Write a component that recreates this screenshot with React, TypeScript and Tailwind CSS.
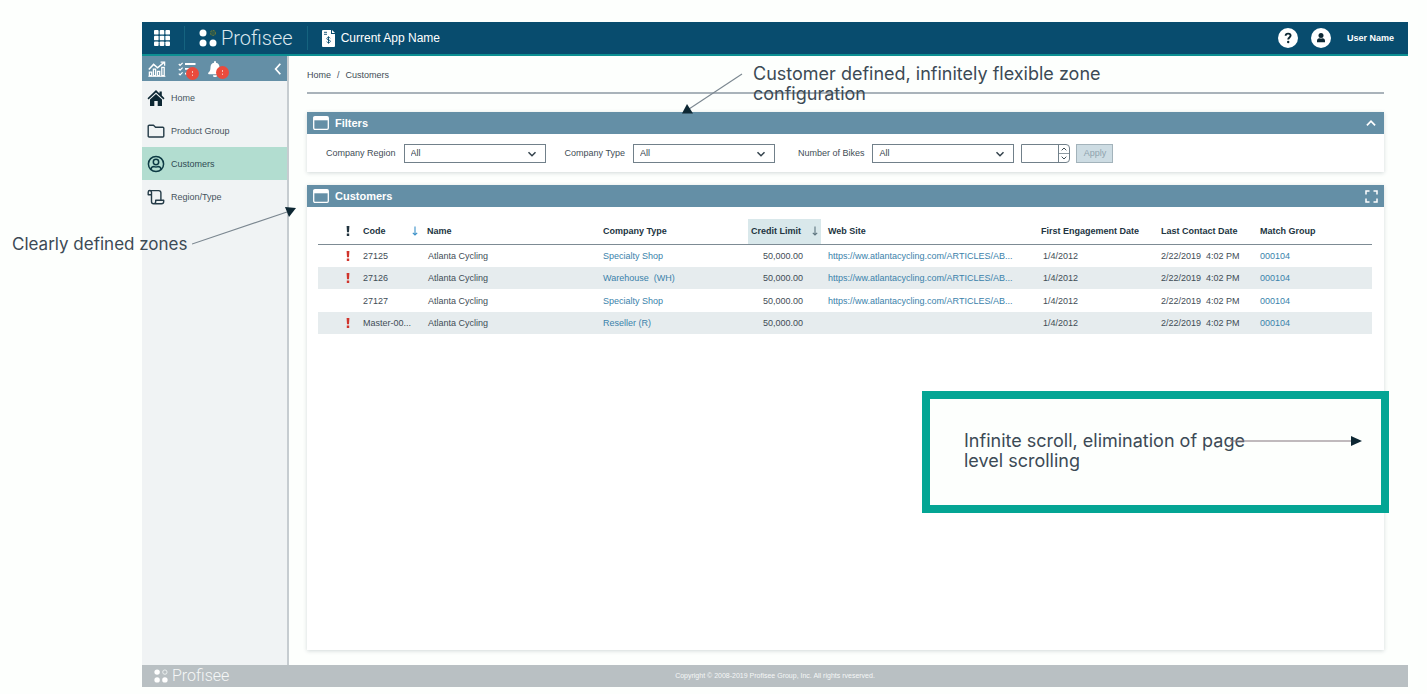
import React from "react";

type Row = {
  alert: boolean;
  code: string;
  name: string;
  type: string;
  credit: string;
  site: string;
  first: string;
  last: string;
  match: string;
};

const SITE = "https://ww.atlantacycling.com/ARTICLES/AB...";

const rows: Row[] = [
  { alert: true, code: "27125", name: "Atlanta Cycling", type: "Specialty Shop", credit: "50,000.00", site: SITE, first: "1/4/2012", last: "2/22/2019  4:02 PM", match: "000104" },
  { alert: true, code: "27126", name: "Atlanta Cycling", type: "Warehouse  (WH)", credit: "50,000.00", site: SITE, first: "1/4/2012", last: "2/22/2019  4:02 PM", match: "000104" },
  { alert: false, code: "27127", name: "Atlanta Cycling", type: "Specialty Shop", credit: "50,000.00", site: SITE, first: "1/4/2012", last: "2/22/2019  4:02 PM", match: "000104" },
  { alert: true, code: "Master-00...", name: "Atlanta Cycling", type: "Reseller (R)", credit: "50,000.00", site: "", first: "1/4/2012", last: "2/22/2019  4:02 PM", match: "000104" },
];

function LogoDots({ className, muted }: { className: string; muted?: boolean }) {
  return (
    <svg viewBox="0 0 18 18" className={className} aria-hidden="true">
      <circle cx="4" cy="4" r="3.5" fill="#fff" />
      <circle cx="4" cy="14" r="3.5" fill="#fff" />
      <circle cx="14" cy="14" r="3.5" fill="#fff" />
      {muted ? (
        <circle cx="14" cy="4" r="2.8" fill="none" stroke="#eef2f2" strokeWidth="1.2" />
      ) : (
        <g>
          <circle cx="14" cy="4" r="3" fill="#2c5a4e" />
          <circle cx="14" cy="4" r="2.6" fill="none" stroke="#6f7a3c" strokeWidth="1" strokeDasharray="1.5 1.5" />
        </g>
      )}
    </svg>
  );
}

function GridIcon() {
  return (
    <svg viewBox="0 0 16 16" className="size-4" fill="#fff" aria-hidden="true">
      {[0, 5.7, 11.4].map((y) =>
        [0, 5.7, 11.4].map((x) => <rect key={`${x}-${y}`} x={x} y={y} width="4.6" height="4.6" rx="0.9" />)
      )}
    </svg>
  );
}

function InvoiceIcon() {
  return (
    <svg viewBox="0 0 13 17" className="h-[17px] w-[13px]" aria-hidden="true">
      <path d="M1 0h8v4h4v12a1 1 0 0 1-1 1H1a1 1 0 0 1-1-1V1a1 1 0 0 1 1-1z" fill="#fff" />
      <path d="M10 0l3 3h-3z" fill="#fff" />
      <path d="M2 2.3h3M2 4.3h3" stroke="#084c6e" strokeWidth="0.9" />
      <path d="M8.3 8.2c-.4-.6-1-.8-1.8-.8-1 0-1.7.4-1.7 1.2 0 1.8 3.6.8 3.6 2.7 0 .9-.8 1.3-1.8 1.3-.9 0-1.6-.3-2-.9M6.5 6.3v7.4" fill="none" stroke="#084c6e" strokeWidth="0.9" />
    </svg>
  );
}

function AnalyticsIcon() {
  return (
    <svg viewBox="0 0 18 16" className="h-4 w-[18px]" fill="none" stroke="#fff" aria-hidden="true">
      <path d="M.8 8.4l4.800-5 4 3.400L16 1.400" strokeWidth="1.500" />
      <path d="M12.600 1.200h4v3.600" strokeWidth="1.300" />
      <path d="M1.400 14.600v-3.400h2.200v3.400zM5.400 14.600V8.200h2.200v6.400zM9.500 14.600v-4.200h2.200v4.200zM13.800 14.600V6.400h2.400v8.200z" strokeWidth="1.300" />
      <path d="M.4 15.300h17" strokeWidth="1" />
    </svg>
  );
}

function TasksIcon() {
  return (
    <svg viewBox="0 0 18 14" className="h-3.5 w-[18px]" fill="none" stroke="#fff" aria-hidden="true">
      <path d="M.8 2l1.300 1.300L4.600.8M.8 6.800l1.300 1.300 2.500-2.500M.8 11.600l1.300 1.300 2.500-2.500" strokeWidth="1.200" />
      <path d="M7 2h10.500M7 6.800h10.500M7 11.600h10.500" strokeWidth="1.800" />
    </svg>
  );
}

function BellIcon() {
  return (
    <svg viewBox="0 0 14 16" className="h-4 w-3.5" fill="#fff" aria-hidden="true">
      <path d="M7 0a1 1 0 0 0-1 1v.8C3.700 2.300 2.500 4 2.500 6.300c0 3-.9 4.300-2 5.300-.7.700-.4 1.700.5 1.700h12c.9 0 1.200-1 .5-1.700-1.100-1-2-2.300-2-5.300C11.500 4 10.300 2.300 8 1.800V1a1 1 0 0 0-1-1z" />
      <path d="M5 14.200h4a2 2 0 0 1-4 0z" />
    </svg>
  );
}

function Badge() {
  return (
    <svg viewBox="0 0 13 13" className="absolute top-[5px] left-2 size-[13px]" aria-hidden="true">
      <circle cx="6.500" cy="6.500" r="6.500" fill="#ea4b3c" />
      <path d="M6.500 4v2M6.500 7.500v1.500" stroke="#f9c8bd" strokeWidth="0.9" />
    </svg>
  );
}

function HomeIcon() {
  return (
    <svg viewBox="0 0 18 18" className="size-[18px]" fill="#0d2733" aria-hidden="true">
      <path d="M9 1L.5 9.300l1 1.200L9 3.400l7.500 7.100 1-1.200-2.700-2.700V2.500h-2.300v1.900z" />
      <path d="M9 4.900l-6 5.700V17h4.300v-5h3.400v5H15v-6.400z" />
    </svg>
  );
}

function FolderIcon() {
  return (
    <svg viewBox="0 0 18 18" className="size-[18px]" fill="none" stroke="#243b47" strokeWidth="1.400" strokeLinejoin="round" aria-hidden="true">
      <path d="M1.200 4.200c0-.6.400-1 1-1h4.300l2 2h7.300c.6 0 1 .4 1 1v7.800c0 .6-.4 1-1 1H2.200c-.6 0-1-.4-1-1z" />
    </svg>
  );
}

function PersonIcon() {
  return (
    <svg viewBox="0 0 18 18" className="size-[18px]" fill="none" stroke="#0d3a44" strokeWidth="1.500" aria-hidden="true">
      <circle cx="9" cy="9" r="7.600" />
      <circle cx="9" cy="7" r="2.700" />
      <path d="M3.800 14.300c.6-2 1.900-2.700 3.200-2.700.8.300 1.300.4 2 .4s1.200-.1 2-.4c1.300 0 2.600.7 3.200 2.700" />
    </svg>
  );
}

function ScrollIcon() {
  return (
    <svg viewBox="0 0 18 18" className="size-[18px]" fill="none" stroke="#243b47" strokeWidth="1.400" strokeLinejoin="round" aria-hidden="true">
      <path d="M4.500 6.800H1.200V4.200a1.600 1.600 0 0 1 3.300 0v9.300c0 1.300.9 2.200 2.100 2.200s2.100-.9 2.100-2.200v-1.200h8v1.200c0 1.300-.9 2.200-2.200 2.200H6.600" />
      <path d="M2.900 2.600h8.800c1.300 0 2.200.9 2.200 2.200v7.500" />
    </svg>
  );
}

function WindowIcon() {
  return (
    <svg viewBox="0 0 16 14" className="h-3.5 w-4" aria-hidden="true">
      <rect x="0.700" y="0.700" width="14.600" height="12.600" rx="1.200" fill="none" stroke="#fff" strokeWidth="1.300" />
      <path d="M1 1h14v3.300H1z" fill="#fff" />
    </svg>
  );
}

function Chevron({ className, d }: { className: string; d: string }) {
  return (
    <svg viewBox="0 0 12 12" className={className} fill="none" stroke="currentColor" strokeWidth="1.500" aria-hidden="true">
      <path d={d} />
    </svg>
  );
}

function SortArrow({ className }: { className: string }) {
  return (
    <svg viewBox="0 0 6 10" className={className} fill="none" stroke="currentColor" strokeWidth="1.100" aria-hidden="true">
      <path d="M3 .5v8.500M.8 6.800L3 9l2.200-2.200" />
    </svg>
  );
}

function Bang({ className }: { className: string }) {
  return (
    <svg viewBox="0 0 4 10" className={className} fill="currentColor" role="img" aria-label="Alert">
      <path d="M.6 0h2.800L3 6.300H1zM.8 7.600h2.400V10H.8z" />
    </svg>
  );
}

function FilterSelect({ id, label }: { id: string; label: string }) {
  return (
    <div className="flex items-center gap-2">
      <label htmlFor={id} className="whitespace-nowrap text-[#3f4d56]">{label}</label>
      <div className="relative">
        <select id={id} className="block h-[19px] w-[142px] appearance-none border border-[#71808a] bg-white pl-1.5 text-[9px] text-[#33424c]">
          <option>All</option>
        </select>
        <Chevron className="pointer-events-none absolute top-1 right-2 size-3 text-[#33424c]" d="M2.500 4.200l3.500 3.500 3.500-3.500" />
      </div>
    </div>
  );
}

function PanelHeader({ title, children }: { title: string; children: React.ReactNode }) {
  return (
    <div className="flex h-[22px] shrink-0 items-center bg-[#648fa6] pr-1.5 pl-1.5 text-white">
      <WindowIcon />
      <h2 className="ml-1.5 flex-1 text-[11px] font-bold">{title}</h2>
      {children}
    </div>
  );
}

const navItems = [
  { label: "Home", icon: <HomeIcon />, active: false },
  { label: "Product Group", icon: <FolderIcon />, active: false },
  { label: "Customers", icon: <PersonIcon />, active: true },
  { label: "Region/Type", icon: <ScrollIcon />, active: false },
];

export default function App() {
  return (
    <div className="relative flex min-h-screen flex-col bg-[#fdfffd] pt-[22px] pr-[19px] pb-[7px] pl-[142px] font-['Liberation_Sans',Arial,sans-serif] text-[9px] leading-4 text-[#3f4d56]">
      <header className="flex h-[34px] items-center border-b-2 border-[#0c8f92] bg-[#084c6e] text-white">
        <button type="button" aria-label="Apps" className="ml-3">
          <GridIcon />
        </button>
        <div className="ml-3.5 flex h-6 items-center border-l border-[#15637f] pl-3.5">
          <LogoDots className="size-[18px]" />
          <span className="ml-1 font-['Roboto',sans-serif] text-[20px] leading-6 font-light text-[#dbe7ee]">Profisee</span>
        </div>
        <div className="ml-3.5 flex h-6 items-center gap-1.5 border-l border-[#15637f] pl-3.5">
          <InvoiceIcon />
          <span className="text-xs">Current App Name</span>
        </div>
        <div className="mr-3.5 ml-auto flex items-center">
          <button type="button" aria-label="Help" className="size-5">
            <svg viewBox="0 0 20 20" className="size-5" aria-hidden="true">
              <circle cx="10" cy="10" r="10" fill="#fff" />
              <path d="M7.600 7.800c.1-1.500 1.100-2.200 2.500-2.200s2.500.7 2.500 2c0 1.900-2.400 1.800-2.400 3.900" fill="none" stroke="#0d2733" strokeWidth="1.900" />
              <circle cx="10.200" cy="14" r="1.200" fill="#0d2733" />
            </svg>
          </button>
          <button type="button" aria-label="Account" className="ml-[13px] size-5">
            <svg viewBox="0 0 20 20" className="size-5" aria-hidden="true">
              <circle cx="10" cy="10" r="10" fill="#fff" />
              <circle cx="10" cy="7.500" r="2.500" fill="#0d2733" />
              <path d="M6 14.200v-1.500c0-1.600 1-2.500 2.300-2.500 1 .5 2.400.5 3.400 0 1.300 0 2.300.9 2.300 2.500v1.500z" fill="#0d2733" />
            </svg>
          </button>
          <span className="ml-4 font-bold">User Name</span>
        </div>
      </header>

      <div className="flex flex-1">
        <aside className="w-[147px] shrink-0 border-r-2 border-[#c6ccd0] bg-[#f0f3f4]">
          <div className="flex h-[25px] items-center bg-[#648fa6] pl-1.5 text-white">
            <button type="button" aria-label="Analytics"><AnalyticsIcon /></button>
            <button type="button" aria-label="Tasks" className="relative ml-3"><TasksIcon /><Badge /></button>
            <button type="button" aria-label="Notifications" className="relative ml-3"><BellIcon /><Badge /></button>
            <button type="button" aria-label="Collapse menu" className="mr-0.5 ml-auto">
              <Chevron className="size-3.5" d="M8 1.500l-4 4.500 4 4.500" />
            </button>
          </div>
          <nav>
            {navItems.map((item) => (
              <a
                key={item.label}
                href="#"
                className={
                  item.active
                    ? "flex h-[33px] items-center gap-1.5 bg-[#b2ddd0] pl-[5px] text-[#2f4a52]"
                    : "flex h-[33px] items-center gap-1.5 pl-[5px] text-[#46545d]"
                }
              >
                {item.icon}
                {item.label}
              </a>
            ))}
          </nav>
        </aside>

        <main className="flex min-w-0 flex-1 flex-col pr-6 pb-[15px] pl-[18px]">
          <div className="flex h-[38px] items-center gap-1.5 border-b-2 border-[#a9b3ba] pt-0.5">
            <a href="#">Home</a>
            <span>/</span>
            <span>Customers</span>
          </div>

          <section className="mt-[18px] bg-white shadow-[0_1px_4px_rgba(60,80,90,0.22)]">
            <PanelHeader title="Filters">
              <button type="button" aria-label="Collapse filters">
                <Chevron className="size-3.5" d="M2.500 8L6 4.500 9.500 8" />
              </button>
            </PanelHeader>
            <div className="flex h-[38px] items-center pl-[19px]">
              <FilterSelect id="region" label="Company Region" />
              <div className="ml-[19px]"><FilterSelect id="type" label="Company Type" /></div>
              <div className="ml-[23px]"><FilterSelect id="bikes" label="Number of Bikes" /></div>
              <div className="ml-[7px] flex h-[19px] w-[49px] rounded-r-sm border border-[#71808a]">
                <input aria-label="Bike count" className="w-9 bg-white px-1 outline-none" />
                <div className="flex flex-1 flex-col divide-y divide-[#8d99a1] border-l border-[#71808a]">
                  <button type="button" aria-label="Increase" className="flex flex-1 items-center justify-center">
                    <Chevron className="size-2" d="M2.500 8L6 4.500 9.500 8" />
                  </button>
                  <button type="button" aria-label="Decrease" className="flex flex-1 items-center justify-center">
                    <Chevron className="size-2" d="M2.500 4L6 7.500 9.500 4" />
                  </button>
                </div>
              </div>
              <button type="button" className="ml-1.5 h-[19px] w-[37px] border border-[#a3b3bb] bg-[#cddce3] text-[#8fa3ae]">Apply</button>
            </div>
          </section>

          <section className="mt-[13px] flex flex-1 flex-col bg-white shadow-[0_1px_4px_rgba(60,80,90,0.22)]">
            <PanelHeader title="Customers">
              <button type="button" aria-label="Full screen">
                <svg viewBox="0 0 13 13" className="size-[13px]" fill="none" stroke="#fff" strokeWidth="1.500" aria-hidden="true">
                  <path d="M4.500 1H1v3.500M8.500 1H12v3.500M4.500 12H1V8.500M8.500 12H12V8.500" />
                </svg>
              </button>
            </PanelHeader>
            <div className="pt-3 pr-3 pl-[11px]">
              <table className="w-full table-fixed border-collapse text-left whitespace-pre">
                <colgroup>
                  <col className="w-[45px]" />
                  <col className="w-16" />
                  <col className="w-44" />
                  <col className="w-[145px]" />
                  <col className="w-[73px]" />
                  <col />
                  <col className="w-[120px]" />
                  <col className="w-[99px]" />
                  <col className="w-28" />
                </colgroup>
                <thead className="text-[#22343f]">
                  <tr className="h-[25px] border-b border-[#7d8b94]">
                    <th className="p-0"><Bang className="ml-7 h-2.5 w-1" /></th>
                    <th className="p-0">
                      <div className="flex items-center justify-between pr-[9px]">Code<SortArrow className="h-2.5 w-1.5 text-[#3d92c9]" /></div>
                    </th>
                    <th className="p-0">Name</th>
                    <th className="p-0">Company Type</th>
                    <th className="bg-[#d9e8eb] p-0">
                      <div className="flex items-center justify-between px-[3px]">Credit Limit<SortArrow className="h-2.5 w-1.5 text-[#5f7680]" /></div>
                    </th>
                    <th className="py-0 pr-0 pl-[7px]">Web Site</th>
                    <th className="p-0">First Engagement Date</th>
                    <th className="p-0">Last Contact Date</th>
                    <th className="p-0">Match Group</th>
                  </tr>
                </thead>
                <tbody>
                  {rows.map((r, i) => (
                    <tr key={i} className="odd:h-[23px] even:h-[22px] even:bg-[#e6ecee]">
                      <td className="p-0">{r.alert && <Bang className="ml-7 h-2.5 w-1 text-[#d0342c]" />}</td>
                      <td className="p-0">{r.code}</td>
                      <td className="p-0 pl-px">{r.name}</td>
                      <td className="p-0"><a href="#" className="text-[#3a82ab]">{r.type}</a></td>
                      <td className="py-0 pr-[18px] pl-0 text-right">{r.credit}</td>
                      <td className="py-0 pr-0 pl-[7px]">{r.site && <a href="#" className="text-[#3a82ab]">{r.site}</a>}</td>
                      <td className="p-0 pl-0.5">{r.first}</td>
                      <td className="p-0">{r.last}</td>
                      <td className="p-0"><a href="#" className="text-[#3a82ab]">{r.match}</a></td>
                    </tr>
                  ))}
                </tbody>
              </table>
            </div>
          </section>
        </main>
      </div>

      <footer className="relative flex h-[22px] items-center justify-center bg-[#b9c0c3] text-[7px] text-[#f5f7f7]">
        <div className="absolute top-0 left-3 flex h-[22px] items-center gap-1">
          <LogoDots className="size-3.5" muted />
          <span className="font-['Roboto',sans-serif] text-[16px] leading-5 font-light">Profisee</span>
        </div>
        <p>Copyright © 2008-2019 Profisee Group, Inc. All rights rveserved.</p>
      </footer>

      <div className="font-['Inter',sans-serif] text-[18px] leading-5 text-[#3c4a55]">
        <p className="absolute top-[234px] left-3 text-[17px] leading-5 whitespace-nowrap">Clearly defined zones</p>
        <p className="absolute top-16 left-[753px] w-[360px]">Customer defined, infinitely flexible zone configuration</p>
        <div className="absolute top-[391px] left-[922px] h-[122px] w-[467px] border-8 border-[#04a594] bg-[#fdfffd] pt-8 pl-[34px]">
          <p className="w-[300px]">Infinite scroll, elimination of page level scrolling</p>
          <svg viewBox="0 0 132 12" className="absolute top-9 left-[300px] h-3 w-[132px]" aria-hidden="true">
            <path d="M0 6h124" stroke="#84777f" strokeWidth="1.200" />
            <path d="M121 1l11 5-11 5z" fill="#0d2733" />
          </svg>
        </div>
      </div>
      <svg viewBox="0 0 104 40" className="absolute top-[206px] left-48 h-10 w-[104px]" aria-hidden="true">
        <path d="M0 38L95 6" stroke="#7b8790" strokeWidth="1.100" />
        <path d="M93 1l11 1-7 9z" fill="#0d2733" />
      </svg>
      <svg viewBox="0 0 62 42" className="absolute top-[73px] left-[681px] h-[42px] w-[62px]" aria-hidden="true">
        <path d="M61 1L8 36" stroke="#7b8790" strokeWidth="1.100" />
        <path d="M6 31l6 9.500L1 40.500z" fill="#0d2733" />
      </svg>
    </div>
  );
}
